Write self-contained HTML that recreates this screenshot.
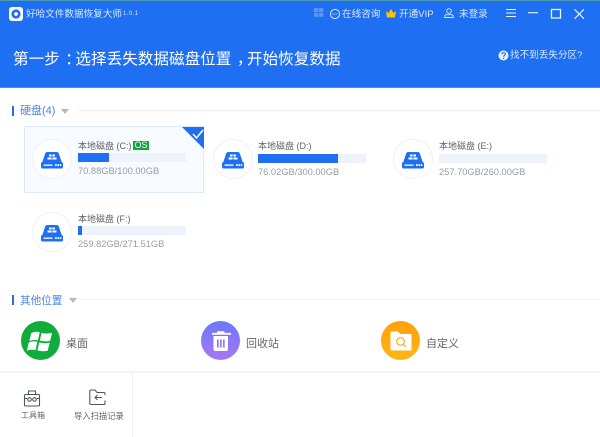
<!DOCTYPE html>
<html lang="zh"><head><meta charset="utf-8"><style>
html,body{margin:0;padding:0;background:#fff}
#p{position:relative;width:600px;height:437px;overflow:hidden;background:#fff;font-family:"Liberation Sans","Noto Sans CJK SC",sans-serif}
.t{position:absolute;white-space:nowrap;line-height:1}
.b{position:absolute;background:#eef3fb;height:9px;width:108px}
.f{position:absolute;left:0;top:0;height:9px;background:#1e6ff1}
.n{font-size:9px;color:#5f6368}
.s{font-size:9.3px;color:#989ca3}
.c{position:absolute;width:38px;height:38px;border:1px solid #f0f1f3;border-radius:50%;background:#fff}
.p{position:relative;left:5.5px}
svg{position:absolute;overflow:visible}
</style></head><body><div id="p">
<div style="position:absolute;left:0;top:0;width:600px;height:88px;background:#1e6ff1"></div>
<div style="position:absolute;left:0;top:0;width:600px;height:1px;background:#4b9bb4"></div>
<div style="position:absolute;left:0;top:87px;width:600px;height:1px;background:#4b8ff5"></div>

<svg style="left:9px;top:7px" width="14" height="14" viewBox="0 0 14 14"><rect width="14" height="14" rx="3" fill="#fff"/><circle cx="7" cy="7" r="4.6" fill="#1e6ff1"/><circle cx="7" cy="7" r="1.9" fill="#fff"/></svg>
<div class="t" style="left:26px;top:10px;font-size:9.6px;color:#dbe8fd">好哈文件数据恢复大师</div>
<div class="t" style="left:123px;top:11px;font-size:6px;color:#dbe8fd;letter-spacing:.4px">1.0.1</div>

<svg style="left:314px;top:8px" width="10" height="9" viewBox="0 0 10 9" fill="#5f96ee"><rect width="4.3" height="4"/><rect x="5" width="4.3" height="4"/><rect y="4.8" width="4.3" height="4"/><rect x="5" y="4.8" width="4.3" height="4"/></svg>
<svg style="left:330px;top:8.500px" width="10" height="10" viewBox="0 0 10 10" fill="none" stroke="#dbe8fd" stroke-width="1"><circle cx="5" cy="5" r="4.600"/><path d="M2.600 5h1M4.500 5h1M6.400 5h1"/></svg>
<div class="t" style="left:342px;top:10px;font-size:9.6px;color:#dbe8fd">在线咨询</div>
<svg style="left:386px;top:9px" width="10" height="9" viewBox="0 0 10 9"><path d="M0 2l2.500 2L5 0l2.500 4L10 2 9 8.500H1z" fill="#ffc400"/></svg>
<div class="t" style="left:399px;top:10px;font-size:9.6px;color:#dbe8fd">开通VIP</div>
<svg style="left:444px;top:8px" width="10" height="10" viewBox="0 0 10 10" fill="none" stroke="#dbe8fd" stroke-width=".9"><circle cx="5" cy="3" r="2.300"/><path d="M.7 9.500V8.200c0-1 1-1.500 2-1.500h4.600c1 0 2 .5 2 1.500v1.300z"/></svg>
<div class="t" style="left:459px;top:10px;font-size:9.6px;color:#dbe8fd">未登录</div>

<svg style="left:506px;top:8px" width="80" height="12" viewBox="0 0 80 12" fill="none" stroke="#eef4fe" stroke-width="1.100"><path d="M0 1.500h10M0 5h10M0 8.500h10"/><path d="M22 4.700h10"/><rect x="45.500" y="1.500" width="9" height="8.500" stroke-width="1.300"/><path d="M68.500 1.300l9.500 9.500M78 1.300l-9.500 9.500"/></svg>

<div class="t" style="left:13px;top:52px;font-size:15.6px;color:#fff">第一步<span class="p">：</span>选择丢失数据磁盘位置<span class="p">，</span>开始恢复数据</div>
<svg style="left:498px;top:50px" width="11" height="11" viewBox="0 0 11 11"><circle cx="5.500" cy="5.500" r="5" fill="#e8f0fe"/><path d="M3.800 4.300c0-2.200 3.500-2.200 3.500 0 0 1.200-1.700 1.200-1.700 2.400" fill="none" stroke="#1e6ff1" stroke-width="1.100"/><circle cx="5.600" cy="8.300" r=".7" fill="#1e6ff1"/></svg>
<div class="t" style="left:510px;top:51px;font-size:9.600px;color:#dbe8fd">找不到丢失分区?</div>

<div style="position:absolute;left:12px;top:106px;width:2px;height:10px;background:#1e6ff1"></div>
<div class="t" style="left:20px;top:106px;font-size:11px;color:#4a86e0">硬盘(4)</div>
<svg style="left:61px;top:109px" width="9" height="5"><path d="M0 0h8L4 5z" fill="#b5b9c0"/></svg>
<div style="position:absolute;left:78px;top:110px;width:522px;height:1px;background:#eef1f5"></div>

<div style="position:absolute;left:24px;top:126px;width:178px;height:65px;background:#f7faff;border:1px solid #dce8fb"></div>
<svg style="left:182px;top:127px" width="23" height="23" viewBox="0 0 23 23"><path d="M0 0h22v22z" fill="#1e6ff1"/><path d="M11 7l3.500 4 6.500-8" fill="none" stroke="#fff" stroke-width="1.500"/></svg>

<svg width="0" height="0"><defs><g id="d"><path d="M13 15q.4-2 2.500-2h9q2.100 0 2.500 2l3 9H10z" fill="#1e6ff1"/><rect x="9" y="23" width="22" height="6.500" rx="1.800" fill="#1e6ff1"/><rect x="11.500" y="25.500" width="9" height="1.300" fill="#fff"/><rect x="23" y="25.200" width="1.800" height="1.800" fill="#fff"/><rect x="25.500" y="25.200" width="1.800" height="1.800" fill="#fff"/><rect x="28" y="25.200" width="1.300" height="1.800" fill="#fff"/><rect x="17" y="15.500" width="2.600" height="2" fill="#fff"/><rect x="20.400" y="15.500" width="2.600" height="2" fill="#fff"/><rect x="15.500" y="18.500" width="4.100" height="2" fill="#fff"/><rect x="20.400" y="18.500" width="4.100" height="2" fill="#fff"/></g></defs></svg>

<div class="c" style="left:32px;top:139px"></div>
<svg style="left:32px;top:139px" width="40" height="40"><use href="#d"/></svg>
<div class="t n" style="left:78px;top:142px">本地磁盘 (C:)</div>
<div class="t" style="left:133px;top:141px;width:16px;height:9px;background:#0fa83c;color:#fff;font-size:9px;line-height:9px;text-align:center">OS</div>
<div class="b" style="left:78px;top:153px"><div class="f" style="width:31px"></div></div>
<div class="t s" style="left:78px;top:167px">70.88GB/100.00GB</div>

<div class="c" style="left:213px;top:139px"></div>
<svg style="left:213px;top:139px" width="40" height="40"><use href="#d"/></svg>
<div class="t n" style="left:258px;top:142px">本地磁盘 (D:)</div>
<div class="b" style="left:258px;top:154px"><div class="f" style="width:80px"></div></div>
<div class="t s" style="left:258px;top:168px">76.02GB/300.00GB</div>

<div class="c" style="left:393px;top:139px"></div>
<svg style="left:393px;top:139px" width="40" height="40"><use href="#d"/></svg>
<div class="t n" style="left:439px;top:142px">本地磁盘 (E:)</div>
<div class="b" style="left:439px;top:154px"></div>
<div class="t s" style="left:439px;top:168px">257.70GB/260.00GB</div>

<div class="c" style="left:32px;top:212px"></div>
<svg style="left:32px;top:212px" width="40" height="40"><use href="#d"/></svg>
<div class="t n" style="left:78px;top:215px">本地磁盘 (F:)</div>
<div class="b" style="left:78px;top:226px"><div class="f" style="width:4px"></div></div>
<div class="t s" style="left:78px;top:240px">259.82GB/271.51GB</div>

<div style="position:absolute;left:12px;top:295px;width:2px;height:10px;background:#1e6ff1"></div>
<div class="t" style="left:20px;top:296px;font-size:10.600px;color:#4a86e0">其他位置</div>
<svg style="left:69px;top:298px" width="9" height="5"><path d="M0 0h8L4 5z" fill="#b5b9c0"/></svg>
<div style="position:absolute;left:82px;top:299px;width:518px;height:1px;background:#eef1f5"></div>

<svg style="left:21px;top:321px" width="39" height="39" viewBox="0 0 39 39"><circle cx="19.500" cy="19.500" r="19.500" fill="#11ad3c"/><g transform="translate(.8 1.500)"><path d="M9.500 10.500q4-2 8.500-.8l-2 8.300q-4.500-1.300-8.500.6zM19.800 10.200q3.500 1.400 7.500.5q2 0 3-.5l-2 8q-4.500 1.400-10.300-.2zM7 20q4.500-1.900 8.600-.5l-2 8.200q-4-1.300-8.500.6zM17.500 19.900q5.500 1.600 10.400.2l-2 8q-4.800 1.300-10.300-.2z" fill="#fff"/></g></svg>
<div class="t" style="left:66px;top:339px;font-size:11px;color:#666">桌面</div>

<svg style="left:201px;top:321px" width="39" height="39" viewBox="0 0 39 39"><defs><linearGradient id="g1" x1="0" y1="0" x2="0" y2="1"><stop offset="0" stop-color="#6b78fb"/><stop offset="1" stop-color="#a878ef"/></linearGradient><linearGradient id="g2" x1="0" y1="0" x2="0" y2="1"><stop offset="0" stop-color="#ff9f0a"/><stop offset="1" stop-color="#ffb616"/></linearGradient></defs><circle cx="19.500" cy="19.500" r="19.500" fill="url(#g1)"/><path d="M16 10.200h7.500v1.700H30v1.800H11V11.900h5z" fill="#fff"/><path d="M12.500 15h14.500v13q0 2-2 2H14.500q-2 0-2-2z" fill="#fff"/><path d="M16 18.500h1.700v8H16zM19 18.500h1.700v8H19zM22 18.500h1.700v8H22z" fill="#8f78f4"/></svg>
<div class="t" style="left:246px;top:339px;font-size:11px;color:#666">回收站</div>

<svg style="left:381px;top:321px" width="39" height="39" viewBox="0 0 39 39"><circle cx="19.500" cy="19.500" r="19.500" fill="url(#g2)"/><path d="M9.500 12q0-1.500 1.500-1.500h5.500l3 2.500H29q1.500 0 1.500 1.500V28q0 1.500-1.500 1.500H11q-1.500 0-1.500-1.500z" fill="#fff"/><circle cx="19.500" cy="20.500" r="3.800" fill="none" stroke="#ffab12" stroke-width="1.200"/><path d="M22.400 23.400l2.600 2.600" stroke="#ffab12" stroke-width="1.200"/></svg>
<div class="t" style="left:426px;top:339px;font-size:11px;color:#666">自定义</div>

<div style="position:absolute;left:0;top:371px;width:600px;height:2px;background:#f2f3f5"></div>
<div style="position:absolute;left:132px;top:373px;width:1px;height:64px;background:#f0f1f3"></div>

<svg style="left:24px;top:390px" width="16" height="17" viewBox="0 0 16 17" fill="none" stroke="#4f5763" stroke-width="1.100"><rect x=".5" y="4.500" width="15" height="11.500" rx="1"/><path d="M4.500 4.500V1h7v3.500M.5 8.500h2.500M13 8.500h2.500"/><circle cx="5.500" cy="9.500" r="1.800"/><circle cx="10.500" cy="9.500" r="1.800"/></svg>
<div class="t" style="left:21px;top:412px;font-size:8px;color:#666">工具箱</div>

<svg style="left:89px;top:389px" width="17" height="17" viewBox="0 0 17 17" fill="none" stroke="#4f5763" stroke-width="1.100"><path d="M16 6V4.500q0-1-1-1H8L6 1H2Q.8 1 .8 2v12q0 1.500 1.500 1.500H15q1 0 1-1v-3"/><path d="M13 8.500H6M8.500 6L6 8.500 8.500 11"/></svg>
<div class="t" style="left:74px;top:412px;font-size:8.300px;color:#666">导入扫描记录</div>
</div></body></html>
